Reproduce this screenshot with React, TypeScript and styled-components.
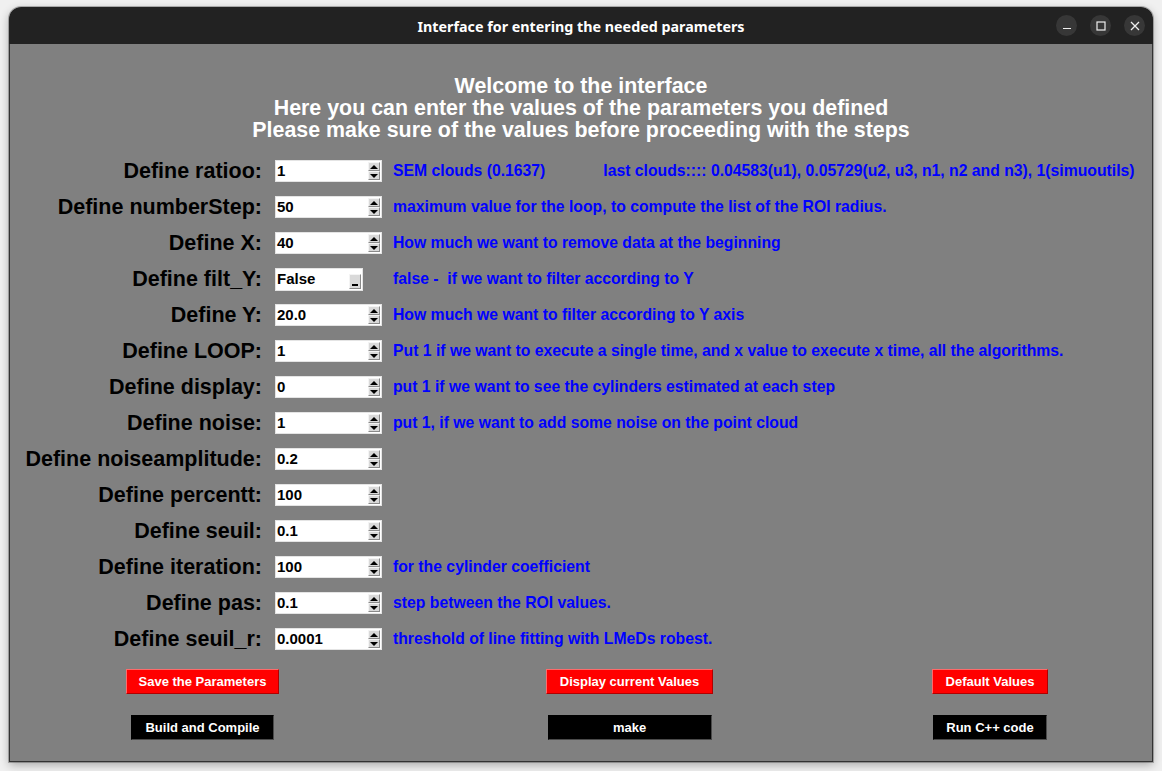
import React from 'react';
import styled, {createGlobalStyle} from 'styled-components';

const GlobalStyle = createGlobalStyle`
  html, body {
    margin: 0;
    padding: 0;
    background: #f0f0f0;
  }

  body {
    font-family: "Liberation Sans", Arial, sans-serif;
  }
`;

const Desktop = styled.div`
  width: 1162px;
  height: 771px;
  box-sizing: border-box;
  padding: 7px 9px 9px 9px;
  overflow: hidden;
`;

const Window = styled.div`
  display: flex;
  flex-direction: column;
  height: 755px;
  border-radius: 12px 12px 0 0;
  overflow: hidden;
  box-shadow: 0 3px 10px rgba(0, 0, 0, 0.3), 0 0 0 1px rgba(0, 0, 0, 0.25);
`;

const TitleBar = styled.div`
  position: relative;
  flex: 0 0 37px;
  display: flex;
  align-items: center;
  justify-content: center;
  padding-top: 1px;
  box-sizing: border-box;
  background: #222222;
  color: #ffffff;
  font-family: "Noto Sans", "DejaVu Sans", sans-serif;
  font-weight: 700;
  font-size: 14.3px;
`;

const WindowControls = styled.div`
  position: absolute;
  top: 0;
  right: 8px;
  height: 100%;
  display: flex;
  align-items: center;
  gap: 13px;
`;

const ControlButton = styled.div`
  width: 21px;
  height: 21px;
  border-radius: 50%;
  background: #373737;
  display: flex;
  align-items: center;
  justify-content: center;
`;

const Body = styled.div`
  flex: 1;
  background: #808080;
  border: 1px solid #333333;
  border-top: none;
  padding-top: 31px;
`;

const Heading = styled.div`
  color: #ffffff;
  font-weight: 700;
  font-size: 21.4px;
  line-height: 22px;
  text-align: center;
  margin-bottom: 12px;
`;

const Form = styled.div`
  display: flex;
  flex-direction: column;
`;

const Row = styled.div`
  display: grid;
  grid-template-columns: 252px 107px 1fr;
  column-gap: 12px;
  align-items: center;
  height: 36px;
`;

const Label = styled.div`
  text-align: right;
  color: #000000;
  font-weight: 700;
  font-size: 21.5px;
  white-space: nowrap;
`;

const Hint = styled.div`
  color: #0000ff;
  font-weight: 700;
  font-size: 15.75px;
  white-space: pre;
`;

const HintGap = styled.span`
  margin-left: 58px;
`;

const Spinbox = styled.div`
  display: flex;
  align-items: stretch;
  width: 107px;
  height: 22px;
  margin-left: 1px;
  box-sizing: border-box;
  background: #ffffff;
  border: 1px solid #e4e4e4;
`;

const FieldText = styled.div`
  flex: 1;
  padding-left: 1px;
  color: #000000;
  font-weight: 700;
  font-size: 15px;
  line-height: 20px;
`;

const Arrows = styled.div`
  display: flex;
  flex-direction: column;
  width: 12px;
  margin: 1px 1px 1px 0;
`;

const ArrowButton = styled.div`
  flex: 1;
  display: flex;
  align-items: center;
  justify-content: center;
  background: #d9d9d9;
  border-top: 1px solid #f4f4f4;
  border-left: 1px solid #f4f4f4;
  border-bottom: 1px solid #8a8a8a;
  border-right: 1px solid #8a8a8a;
`;

const Triangle = styled.div<{$down?: boolean}>`
  width: 0;
  height: 0;
  border-left: 4px solid transparent;
  border-right: 4px solid transparent;
  ${({$down}) => ($down ? 'border-top: 4px solid #000;' : 'border-bottom: 4px solid #000;')}
`;

const OptionMenu = styled.div`
  display: flex;
  align-items: flex-end;
  width: 88px;
  height: 23px;
  box-sizing: border-box;
  margin-left: 1px;
  background: #ffffff;
  border: 1px solid #e4e4e4;
`;

const Indicator = styled.div`
  width: 12px;
  height: 15px;
  margin: 0 1px 1px 0;
  box-sizing: border-box;
  display: flex;
  align-items: flex-end;
  justify-content: center;
  padding-bottom: 2px;
  background: #d9d9d9;
  border-top: 1px solid #f4f4f4;
  border-left: 1px solid #f4f4f4;
  border-bottom: 1px solid #8a8a8a;
  border-right: 1px solid #8a8a8a;

  &:after {
    content: '';
    width: 6px;
    height: 2px;
    background: #000;
  }
`;

const MenuText = styled(FieldText)`
  align-self: center;
`;

const ButtonGrid = styled.div`
  display: grid;
  grid-template-columns: 385px 469px 252px;
  grid-auto-rows: 24px;
  row-gap: 22px;
  justify-items: center;
  margin-top: 12px;
`;

const Button = styled.div<{$tone: 'red' | 'black'; $w: number}>`
  width: ${({$w}) => $w}px;
  height: 25px;
  box-sizing: border-box;
  display: flex;
  align-items: center;
  justify-content: center;
  color: #ffffff;
  font-weight: 700;
  font-size: 13px;
  white-space: nowrap;
  background: ${({$tone}) => ($tone === 'red' ? '#ff0000' : '#000000')};
  border: 1px solid ${({$tone}) => ($tone === 'red' ? '#ff6a6a' : '#000000')};
  border-bottom-color: ${({$tone}) => ($tone === 'red' ? '#b00000' : '#4a4a4a')};
  border-right-color: ${({$tone}) => ($tone === 'red' ? '#b00000' : '#4a4a4a')};
`;

type Param = {label: string; value: string; hint?: React.ReactNode; menu?: boolean};

const params: Param[] = [
  {
    label: 'Define ratioo:',
    value: '1',
    hint: (
      <>
        SEM clouds (0.1637)
        <HintGap>last clouds:::: 0.04583(u1), 0.05729(u2, u3, n1, n2 and n3), 1(simuoutils)</HintGap>
      </>
    ),
  },
  {label: 'Define numberStep:', value: '50', hint: 'maximum value for the loop, to compute the list of the ROI radius.'},
  {label: 'Define X:', value: '40', hint: 'How much we want to remove data at the beginning'},
  {label: 'Define filt_Y:', value: 'False', menu: true, hint: 'false -  if we want to filter according to Y'},
  {label: 'Define Y:', value: '20.0', hint: 'How much we want to filter according to Y axis'},
  {
    label: 'Define LOOP:',
    value: '1',
    hint: 'Put 1 if we want to execute a single time, and x value to execute x time, all the algorithms.',
  },
  {label: 'Define display:', value: '0', hint: 'put 1 if we want to see the cylinders estimated at each step'},
  {label: 'Define noise:', value: '1', hint: 'put 1, if we want to add some noise on the point cloud'},
  {label: 'Define noiseamplitude:', value: '0.2'},
  {label: 'Define percentt:', value: '100'},
  {label: 'Define seuil:', value: '0.1'},
  {label: 'Define iteration:', value: '100', hint: 'for the cylinder coefficient'},
  {label: 'Define pas:', value: '0.1', hint: 'step between the ROI values.'},
  {label: 'Define seuil_r:', value: '0.0001', hint: 'threshold of line fitting with LMeDs robest.'},
];

const Field = ({value, menu}: {value: string; menu?: boolean}) =>
  menu ? (
    <OptionMenu>
      <MenuText>{value}</MenuText>
      <Indicator />
    </OptionMenu>
  ) : (
    <Spinbox>
      <FieldText>{value}</FieldText>
      <Arrows>
        <ArrowButton>
          <Triangle />
        </ArrowButton>
        <ArrowButton>
          <Triangle $down />
        </ArrowButton>
      </Arrows>
    </Spinbox>
  );

const App = () => (
  <Desktop>
    <GlobalStyle />
    <Window>
      <TitleBar>
        Interface for entering the needed parameters
        <WindowControls>
          <ControlButton>
            <svg width="10" height="10" viewBox="0 0 10 10">
              <path d="M1 7.5h8" stroke="#eee" strokeWidth="1.2" />
            </svg>
          </ControlButton>
          <ControlButton>
            <svg width="10" height="10" viewBox="0 0 10 10">
              <rect x="1" y="1" width="8" height="8" fill="none" stroke="#eee" strokeWidth="1.2" />
            </svg>
          </ControlButton>
          <ControlButton>
            <svg width="10" height="10" viewBox="0 0 10 10">
              <path d="M1 1l8 8M9 1l-8 8" stroke="#eee" strokeWidth="1.3" />
            </svg>
          </ControlButton>
        </WindowControls>
      </TitleBar>

      <Body>
        <Heading>
          Welcome to the interface
          <br />
          Here you can enter the values of the parameters you defined
          <br />
          Please make sure of the values before proceeding with the steps
        </Heading>

        <Form>
          {params.map(p => (
            <Row key={p.label}>
              <Label>{p.label}</Label>
              <Field value={p.value} menu={p.menu} />
              <Hint>{p.hint}</Hint>
            </Row>
          ))}
        </Form>

        <ButtonGrid>
          <Button $tone="red" $w={153}>Save the Parameters</Button>
          <Button $tone="red" $w={167}>Display current Values</Button>
          <Button $tone="red" $w={116}>Default Values</Button>
          <Button $tone="black" $w={143}>Build and Compile</Button>
          <Button $tone="black" $w={164}>make</Button>
          <Button $tone="black" $w={114}>Run C++ code</Button>
        </ButtonGrid>
      </Body>
    </Window>
  </Desktop>
);

export default App;
